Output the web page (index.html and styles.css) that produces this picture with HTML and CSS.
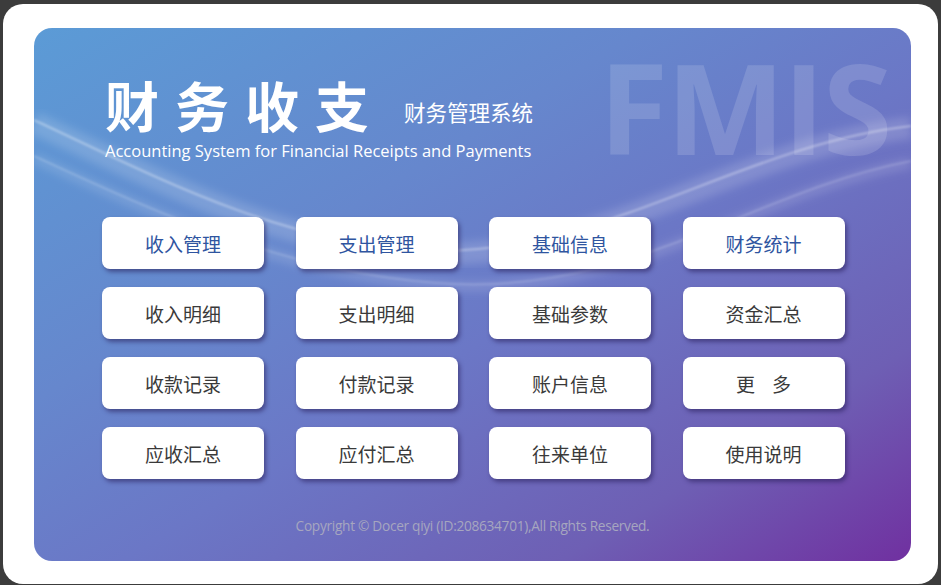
FILE: index.html
```html
<!DOCTYPE html>
<html lang="zh-CN">
<head>
<meta charset="utf-8">
<title>财务收支</title>
<link rel="stylesheet" href="styles.css">
</head>
<body>
<div class="frame">
  <div class="panel">
    <svg class="swoosh" viewBox="0 0 877 533" preserveAspectRatio="none">
      <defs>
        <filter id="blur4"><feGaussianBlur stdDeviation="4"/></filter>
        <filter id="blur1"><feGaussianBlur stdDeviation="1"/></filter>
      </defs>
      <path d="M0 95 C 120 150, 240 215, 380 225 C 560 238, 700 120, 877 100" fill="none" stroke="rgba(255,255,255,0.16)" stroke-width="22" filter="url(#blur4)"/>
      <path d="M0 92 C 120 148, 240 212, 380 222 C 560 234, 700 118, 877 98" fill="none" stroke="rgba(255,255,255,0.35)" stroke-width="2" filter="url(#blur1)"/>
      <path d="M0 130 C 130 190, 260 250, 420 258 C 600 266, 720 165, 877 135" fill="none" stroke="rgba(255,255,255,0.14)" stroke-width="10" filter="url(#blur4)"/>
      <path d="M0 128 C 130 188, 260 248, 420 256 C 600 264, 720 163, 877 133" fill="none" stroke="rgba(255,255,255,0.22)" stroke-width="1.5" filter="url(#blur1)"/>
    </svg>
    <div class="watermark">FMIS</div>
    <header class="head">
      <div class="title-row">
        <h1 class="title">财务收支</h1>
        <span class="subtitle">财务管理系统</span>
      </div>
      <p class="tagline">Accounting System for Financial Receipts and Payments</p>
    </header>
    <div class="grid">
      <div class="btn primary">收入管理</div>
      <div class="btn primary">支出管理</div>
      <div class="btn primary">基础信息</div>
      <div class="btn primary">财务统计</div>
      <div class="btn">收入明细</div>
      <div class="btn">支出明细</div>
      <div class="btn">基础参数</div>
      <div class="btn">资金汇总</div>
      <div class="btn">收款记录</div>
      <div class="btn">付款记录</div>
      <div class="btn">账户信息</div>
      <div class="btn">更&nbsp;&nbsp;&nbsp;&nbsp;多</div>
      <div class="btn">应收汇总</div>
      <div class="btn">应付汇总</div>
      <div class="btn">往来单位</div>
      <div class="btn">使用说明</div>
    </div>
    <footer class="copy">Copyright © Docer qiyi (ID:208634701),All Rights Reserved.</footer>
  </div>
</div>
</body>
</html>
```
FILE: styles.css
```css
html, body {
  margin: 0;
  padding: 0;
  background: #3c3c3c;
  height: 585px;
  overflow: hidden;
}
.frame {
  margin: 4px 3px 0 3px;
  height: 580px;
  box-sizing: border-box;
  background: #ffffff;
  border-radius: 20px;
  padding: 24px 27px 23px 31px;
}
.panel {
  position: relative;
  height: 533px;
  border-radius: 18px;
  overflow: hidden;
  background: linear-gradient(to bottom right, #5b9bd6 0%, #6687cd 35%, #6b77c6 55%, #6e5fb4 80%, #7030a0 100%);
  display: flex;
  flex-direction: column;
  font-family: "Noto Sans CJK SC", sans-serif;
}
.swoosh {
  position: absolute;
  left: 0;
  top: 0;
  width: 100%;
  height: 100%;
}
.watermark {
  position: absolute;
  left: 565px;
  top: 15px;
  font-family: "Open Sans", sans-serif;
  font-weight: 700;
  font-size: 126px;
  letter-spacing: -2px;
  color: rgba(255, 255, 255, 0.14);
  line-height: 1;
}
.head {
  position: relative;
  padding: 49px 0 0 71px;
  color: #ffffff;
}
.title-row {
  display: flex;
  align-items: flex-start;
  gap: 19px;
}
.title {
  margin: 0;
  font-size: 54px;
  font-weight: 700;
  letter-spacing: 16px;
  line-height: 56px;
}
.subtitle {
  margin-top: 21px;
  font-size: 21.5px;
  line-height: 28px;
  font-weight: 400;
}
.tagline {
  margin: 7px 0 0 0;
  font-family: "Open Sans", sans-serif;
  font-size: 16.5px;
  line-height: 22px;
}
.grid {
  position: relative;
  margin: 55px 0 0 68px;
  display: grid;
  grid-template-columns: repeat(4, 162px);
  grid-auto-rows: 52px;
  column-gap: 31.5px;
  row-gap: 18px;
}
.btn {
  background: #ffffff;
  border-radius: 8px;
  box-shadow: 2px 3px 4px rgba(40, 30, 90, 0.55);
  display: flex;
  align-items: center;
  justify-content: center;
  font-size: 19px;
  color: #3a3a3a;
}
.btn.primary {
  color: #2f55a0;
}
.copy {
  position: relative;
  margin-top: auto;
  margin-bottom: 26px;
  text-align: center;
  font-family: "Open Sans", sans-serif;
  font-size: 13.7px;
  letter-spacing: -0.3px;
  color: #a6a6bf;
}
```
